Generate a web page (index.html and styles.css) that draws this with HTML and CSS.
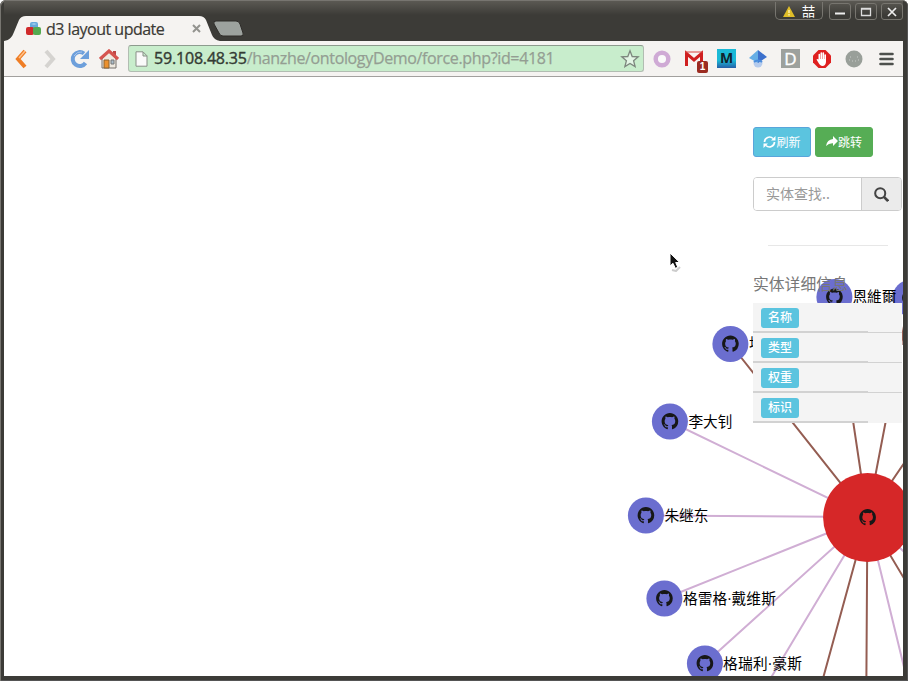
FILE: index.html
```html
<!DOCTYPE html>
<html lang="zh">
<head>
<meta charset="utf-8">
<title>d3 layout update</title>
<link rel="stylesheet" href="styles.css">
</head>
<body>
<div class="window">
  <header class="titlebar">
    <div class="tabs">
      <svg class="tab-shape" width="246" height="26" viewBox="0 0 246 26"><path d="M0 26C6 25 8 22 10 17L15 5Q17 1 22 1H195Q200 1 202 5L208 20Q210 25 216 26Z" fill="#f5f3f1"/><path d="M212 6H232Q235 6 236 9L239 18Q240 21 237 21H219Q216 21 215 18L210 9Q209 6 212 6Z" fill="#9da29e" stroke="#2e2c29"/></svg>
      <div class="tab">
        <svg width="15" height="14" viewBox="0 0 15 14"><rect x="4" y="0" width="8" height="8" rx="2" fill="#68a9dc"/><rect x="0" y="5" width="8" height="8" rx="2" fill="#d02a2b"/><rect x="7" y="5" width="8" height="8" rx="2" fill="#54aa50"/><path d="M5 2l3-1 3 1-3 1z" fill="#9bcced"/></svg>
        <span class="tab-title">d3 layout update</span>
        <svg class="tab-close" width="9" height="9" viewBox="0 0 9 9"><path d="M1 1l7 7M8 1L1 8" stroke="#93938f" stroke-width="2"/></svg>
      </div>
    </div>
    <div class="controls">
      <div class="ime"><svg width="12" height="11" viewBox="0 0 12 11"><path d="M6 0L12 11H0Z" fill="#dfbd28"/><path d="M6 4v3M6 8v1.5" stroke="#fff3b0" stroke-width="1.4"/></svg><span>喆</span></div>
      <div class="control"><svg width="12" height="12" viewBox="0 0 12 12"><path d="M1 7.5h10" stroke="#eee" stroke-width="2"/></svg></div>
      <div class="control"><svg width="12" height="12" viewBox="0 0 12 12"><path d="M1.500 2.500h9v7h-9zM1 3h10" fill="none" stroke="#ddd" stroke-width="1.3"/></svg></div>
      <div class="control"><svg width="12" height="12" viewBox="0 0 12 12"><path d="M2 2l8 8M10 2l-8 8" stroke="#eee" stroke-width="1.7"/></svg></div>
    </div>
  </header>
  <nav class="toolbar">
    <div class="nav-icons">
      <svg width="20" height="20" viewBox="0 0 20 20"><path d="M13 2L6 10l7 8" fill="none" stroke="#ef7d25" stroke-width="4"/><path d="M13 2L7 9" stroke="#ffc18a" stroke-width="1.5"/></svg>
      <svg width="20" height="20" viewBox="0 0 20 20"><path d="M5 2l7 8-7 8" fill="none" stroke="#d5d3d0" stroke-width="4"/></svg>
      <svg width="20" height="20" viewBox="0 0 20 20"><path d="M15.500 14A7 7 0 1 1 14 4.500" fill="none" stroke="#6d9fdb" stroke-width="4"/><path d="M19 1v9h-9z" fill="#6d9fdb"/><path d="M4 7q3-5 8-4" fill="none" stroke="#a9c4ea"/></svg>
      <svg width="20" height="20" viewBox="0 0 20 20"><path d="M3 10v9h14v-9l-7-7z" fill="#eee9e0" stroke="#77716c"/><path d="M14 2h3v6h-3z" fill="#bd4545"/><path d="M1 10l9-8 9 8" fill="none" stroke="#d5544f" stroke-width="3.2"/><path d="M5 11h5v8H5z" fill="#ec912e" stroke="#8a6333"/><path d="M12 11h3v4h-3z" fill="#a9bdcc" stroke="#777"/></svg>
    </div>
    <div class="address">
      <svg class="page-icon" width="13" height="16" viewBox="0 0 13 16"><path d="M1 .8h7l4 4v10.4H1zM8 1v4h4" fill="#fafafa" stroke="#888f87"/></svg>
      <span class="url"><b>59.108.48.35</b>/hanzhe/ontologyDemo/force.php?id=4181</span>
      <svg class="star" width="20" height="20" viewBox="0 0 20 20"><path d="M10 1.800l2.200 5.700 6 .3-4.600 3.900 1.500 5.900-5.100-3.200-5.100 3.200 1.500-5.900-4.600-3.900 6-.3z" fill="#e3f5e5" stroke="#7d877e" stroke-width="1.300"/></svg>
    </div>
    <div class="extensions">
      <svg width="20" height="20" viewBox="0 0 20 20"><circle cx="10" cy="10" r="6.300" fill="#fafafa" stroke="#cfaad5" stroke-width="4.500"/></svg>
      <div class="mail"><svg width="20" height="20" viewBox="0 0 20 20"><path d="M1 3h18v14H1z" fill="#f8f5f3"/><path d="M2.500 17V4.500l7.500 6.500 7.500-6.500V17" fill="none" stroke="#cf1f20" stroke-width="3"/><path d="M1 3h18" stroke="#d84440"/></svg><span class="badge">1</span></div>
      <div class="m-icon">M</div>
      <svg width="20" height="20" viewBox="0 0 20 20"><circle cx="10" cy="14" r="4.500" fill="#b5cbed"/><path d="M10 1L1 9l9 5z" fill="#65aee5"/><path d="M10 1l9 7-9 6z" fill="#3c70cc"/><path d="M6 13q4-3 8 0" fill="none" stroke="#4b8ddd" stroke-width="2"/></svg>
      <div class="d-icon">D</div>
      <svg width="20" height="20" viewBox="0 0 20 20"><path d="M6.500 1h7L19 6.500v7L13.500 19h-7L1 13.500v-7z" fill="#df2020"/><path d="M7.300 12V5.500M9.300 11V4M11.300 11V4M13.200 11V6" stroke="#fff" stroke-width="1.600" stroke-linecap="round"/><path d="M6.500 10h7.500v3q-.5 4-3.500 4-2.500 0-4.500-4L4.500 10.500q1-1 2 .5z" fill="#fff"/></svg>
      <svg width="20" height="20" viewBox="0 0 20 20"><circle cx="10" cy="10" r="8.500" fill="#999f99"/><path d="M6 8h1M13 8h1M5 11h1M8 12h1M11 12h1M14 11h1" stroke="#c8cbc8"/></svg>
      <svg width="20" height="20" viewBox="0 0 20 20"><path d="M4.500 5h12M4.500 10h12M4.500 15h12" stroke="#4d504d" stroke-width="2.600" stroke-linecap="round"/></svg>
    </div>
  </nav>
  <main class="page">
    <svg class="graph" width="899" height="599" viewBox="3.600 77 899 599">
      <defs>
        <path id="mark" fill="#171717" d="M8 0C3.580 0 0 3.580 0 8c0 3.540 2.290 6.530 5.470 7.590.4.070.550-.170.550-.380 0-.190-.010-.820-.010-1.490-2.010.370-2.530-.490-2.690-.940-.090-.230-.480-.940-.820-1.130-.280-.150-.680-.520-.010-.530.630-.010 1.080.580 1.230.820.720 1.210 1.870.870 2.330.660.070-.520.280-.870.510-1.070-1.780-.200-3.640-.890-3.640-3.950 0-.870.310-1.590.820-2.150-.080-.200-.360-1.020.080-2.120 0 0 .670-.210 2.200.820.640-.180 1.320-.270 2-.270s1.360.090 2 .270c1.530-1.040 2.200-.820 2.200-.820.440 1.100.160 1.920.080 2.120.510.560.820 1.270.820 2.150 0 3.070-1.870 3.750-3.650 3.950.290.250.540.730.540 1.480 0 1.070-.010 1.930-.010 2.200 0 .210.150.460.550.380A8.010 8.010 0 0 0 16 8c0-4.420-3.580-8-8-8z" transform="translate(-8.300 -8.500) scale(1.040)"/>
        <g id="node"><circle r="18" fill="#6b6ecf"/><use href="#mark"/></g>
      </defs>
      <g class="links pale">
        <path d="M867 517L669.500 421.500M867 517L645.500 515.500M867 517L664 598.500M867 517L704.500 663.500M867 517L771 677M867 517L906 677M867 517L910 558"/>
      </g>
      <g class="links brown">
        <path d="M867 517L730 344M867 517L834 296M867 517L909 298M867 517L910 454M867 517L910 589M867 517L823 677M867 517L866 677M903 330v15"/>
      </g>
      <circle cx="867.200" cy="517.500" r="44.500" fill="#d62728"/>
      <use href="#mark" x="867.200" y="517.500"/>
      <use href="#node" x="834" y="297"/>
      <use href="#node" x="910" y="298"/>
      <use href="#node" x="730" y="344"/>
      <use href="#node" x="669.500" y="421.500"/>
      <use href="#node" x="645.500" y="515.500"/>
      <use href="#node" x="664" y="598.500"/>
      <use href="#node" x="704.500" y="663.500"/>
      <g class="labels">
        <text x="852" y="302" textLength="44">恩維爾</text>
        <text x="748.500" y="349">埃</text>
        <text x="688" y="427" textLength="44">李大钊</text>
        <text x="664" y="521" textLength="44">朱继东</text>
        <text x="682.500" y="604" textLength="93">格雷格·戴维斯</text>
        <text x="722.500" y="669" textLength="79">格瑞利·豪斯</text>
      </g>
    </svg>
    <aside class="sidebar">
      <div class="actions">
        <button class="button refresh"><svg width="13" height="12" viewBox="0 0 13 12"><path d="M1.500 6A5 5 0 0 1 10 2.500M11.500 6A5 5 0 0 1 3 9.500" fill="none" stroke="#fff" stroke-width="1.700"/><path d="M12.500 0v4.500H8zM.5 12V7.500H5z" fill="#fff"/></svg>刷新</button>
        <button class="button jump"><svg width="12" height="12" viewBox="0 0 12 12"><path d="M7 0l5 5-5 5V7.300Q3 7 0 10 1 3.500 7 3z" fill="#fff"/></svg>跳转</button>
      </div>
      <div class="search">
        <input type="text" placeholder="实体查找..">
        <button class="search-button"><svg width="15" height="15" viewBox="0 0 14 14"><circle cx="5.800" cy="5.800" r="4.700" fill="none" stroke="#444" stroke-width="1.900"/><path d="M9 9l4.200 4.200" stroke="#444" stroke-width="2.500"/></svg></button>
      </div>
      <hr>
      <h2>实体详细信息</h2>
      <ul class="details">
        <li><span class="label">名称</span></li>
        <li><span class="label">类型</span></li>
        <li><span class="label">权重</span></li>
        <li><span class="label">标识</span></li>
      </ul>
    </aside>
    <svg class="cursor" width="14" height="20" viewBox="0 0 14 20"><path d="M4 18l4 1 4-4" fill="none" stroke="#ccc" stroke-width="2"/><path d="M2 1v13l3-2.700 2.300 5 2.500-1L7.700 10.500h4z" fill="#111" stroke="#fff"/></svg>
  </main>
</div>
</body>
</html>
```
FILE: styles.css
```css
* { box-sizing: border-box; }
body {
  margin: 0;
  overflow: hidden;
  font-family: "Open Sans", "Noto Sans CJK SC", sans-serif;
}
svg { display: block; flex: none; }
.window {
  display: flex;
  flex-direction: column;
  width: 908px;
  height: 681px;
  padding: 0 5px 5px 4px;
  background: #3c3b37;
  border-radius: 6px 6px 0 0;
  box-shadow: inset 1px 1px #777570, inset -1px -1px #555;
}
.titlebar {
  display: flex;
  justify-content: space-between;
  flex: none;
  height: 40px;
  margin-top: 1px;
  background: linear-gradient(#5b5953, #3c3b37 14px);
}
.tabs { display: grid; align-content: end; }
.tab-shape, .tab { grid-area: 1 / 1; }
.tab {
  display: flex;
  align-items: center;
  width: 197px;
  padding: 1px 0 0 22px;
}
.tab-title {
  margin-left: 5px;
  font-size: 16px;
  line-height: 22px;
  letter-spacing: -.5px;
  white-space: nowrap;
  color: #3b3935;
  -webkit-text-stroke: .2px #3b3935;
}
.tab-close { margin-left: auto; }
.controls { display: flex; gap: 4px; }
.ime, .control {
  display: flex;
  align-items: center;
  justify-content: center;
  margin-top: 2px;
  height: 17px;
  width: 22px;
  border: 1px solid #77756f;
  border-radius: 3px;
}
.ime {
  width: 48px;
  height: 18px;
  margin: 1px 2px 0 0;
  padding-top: 1px;
  gap: 7px;
  border-top: 0;
  border-radius: 0 0 5px 5px;
  color: #fff;
  font-size: 13px;
  line-height: 16px;
}
.toolbar {
  display: flex;
  align-items: center;
  height: 36px;
  flex: none;
  padding-left: 8px;
  background: #f5f3f1;
  border-bottom: 1px solid #a2a09e;
}
.nav-icons { display: flex; gap: 9px; width: 116px; }
.address {
  display: flex;
  align-items: center;
  width: 516px;
  height: 27px;
  padding: 0 3px 0 6px;
  background: #c8edcc;
  border: 1px solid #b2bdb2;
  border-top-color: #8d9b8e;
  border-radius: 3px;
}
.url {
  margin-left: 6px;
  padding-bottom: 1px;
  color: #949e93;
  font-size: 16px;
  line-height: 22px;
  letter-spacing: -.35px;
  white-space: nowrap;
  -webkit-text-stroke: .25px #949e93;
}
.url b {
  color: #343b34;
  font-weight: 400;
  letter-spacing: -.18px;
  -webkit-text-stroke: .4px #343b34;
}
.star { margin-left: auto; }
.extensions {
  display: flex;
  align-items: center;
  gap: 12px;
  margin-left: 8px;
}
.mail { position: relative; }
.badge {
  position: absolute;
  left: 13px;
  top: 12px;
  width: 11px;
  height: 12px;
  border-radius: 2px;
  background: #9b2b21;
  color: #fff;
  font: bold 10px/12px "Liberation Sans", sans-serif;
  text-align: center;
}
.m-icon, .d-icon {
  width: 19px;
  height: 19px;
  margin-left: 1px;
  text-align: center;
}
.m-icon {
  background: linear-gradient(#1bb9d6 60%, #255fa8);
  font: bold 14px/18px "Open Sans", sans-serif;
  color: #10232d;
}
.d-icon {
  background: #9da19d;
  color: #fff;
  font: 500 17px/19px "Open Sans", sans-serif;
  -webkit-text-stroke: .4px #fff;
}
.page {
  position: relative;
  display: grid;
  grid-template-columns: 749px 150px;
  height: 599px;
  background: #fff;
  overflow: hidden;
}
.graph { grid-area: 1 / 1 / 2 / 3; }
.links { fill: none; stroke-width: 2; }
.pale { stroke: #d0aed4; }
.brown { stroke: #945d52; }
.labels { font-size: 14.7px; fill: #000; }
.sidebar {
  grid-area: 1 / 2;
  z-index: 1;
  width: 149px;
  padding-top: 50px;
}
.actions { display: flex; gap: 4px; }
.button {
  display: flex;
  align-items: center;
  justify-content: center;
  width: 58px;
  height: 30px;
  padding: 0;
  border: 1px solid #59a5db;
  border-radius: 3px;
  color: #fff;
  background: #5bc4df;
  font: 12px/18px "Noto Sans CJK SC", sans-serif;
}
.jump { background: #56ad55; border-color: #56ad55; }
.search {
  display: flex;
  height: 34px;
  margin-top: 20px;
  border: 1px solid #ccc;
  border-radius: 4px;
  overflow: hidden;
  background: #fff;
}
.search input {
  width: 107px;
  padding: 0 0 2px 12px;
  border: 0;
  font: 14px "Noto Sans CJK SC", sans-serif;
}
.search input::placeholder { color: #999; }
.search-button {
  display: grid;
  place-items: center;
  flex: 1;
  padding: 1px 0 0;
  border: 0;
  border-left: 1px solid #ccc;
  background: #ebebeb;
}
hr {
  width: 120px;
  height: 1px;
  margin: 34px 0 28px 15px;
  border: 0;
  background: #e7e7e7;
}
h2 {
  margin: 0;
  height: 29px;
  font: 15.800px/20px "Noto Sans CJK SC", sans-serif;
  color: #777;
}
.details { margin: 0; padding: 0; list-style: none; }
.details li {
  display: flex;
  height: 30px;
  padding: 5px 8px;
  border-bottom: 1px solid #d2d2d2;
  background: linear-gradient(#d2d2d2, #d2d2d2) 0 100% / 115px 1px no-repeat #f4f4f4;
}
.details li:last-child { border-bottom: 0; background-size: 115px 2px; }
.label {
  width: 38px;
  height: 20px;
  border-radius: 3px;
  background: #5bc4df;
  color: #fff;
  font: 500 12px/17px "Noto Sans CJK SC", sans-serif;
  text-align: center;
}
.cursor { position: absolute; left: 664px; top: 175px; }
```
